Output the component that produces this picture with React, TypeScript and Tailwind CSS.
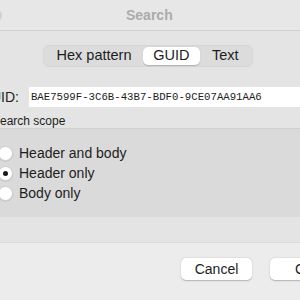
import React from "react";

const segments = ["Hex pattern", "GUID", "Text"];

const scopes = [
  { label: "Header and body", checked: false },
  { label: "Header only", checked: true },
  { label: "Body only", checked: false },
];

function Radio({ checked }: { checked: boolean }) {
  return (
    <span className="flex h-[15px] w-[15px] shrink-0 items-center justify-center rounded-full border border-[#cfcfcf] bg-white shadow-[0_0.5px_1px_rgba(0,0,0,0.15)]">
      {checked && <span className="h-[5px] w-[5px] rounded-full bg-[#1a1a1a]" />}
    </span>
  );
}

export default function App() {
  return (
    <div
      className="flex h-[300px] w-[300px] flex-col overflow-hidden bg-[#ececec] text-[#1d1d1d]"
      style={{ fontFamily: '"Liberation Sans", Arial, sans-serif' }}
    >
      {/* Title bar */}
      <div className="flex h-[31px] shrink-0 items-center border-b border-[#d2d2d2] bg-[#e7e7e7]">
        <span className="ml-[-11px] h-[13px] w-[13px] rounded-full bg-[#cfcfcf]" />
        <span className="ml-[124px] text-[14px] font-bold text-[#ababab]">Search</span>
      </div>

      {/* Content */}
      <div className="flex h-[211px] shrink-0 flex-col bg-[#e4e4e4]">
        <div className="ml-[43px] mt-[14px] flex h-[22px] w-[210px] items-center rounded-[6px] border border-[#d6d6d6] bg-[#dcdcdc] p-px text-[14.5px]">
          {segments.map((s) => (
            <div
              key={s}
              className={
                s === "GUID"
                  ? "flex h-full w-[57px] items-center justify-center rounded-[5px] bg-white shadow-[0_0.5px_1px_rgba(0,0,0,0.2)]"
                  : s === "Text"
                  ? "flex h-full w-[52px] items-center justify-center"
                  : "flex h-full w-[99px] items-center justify-center"
              }
            >
              {s}
            </div>
          ))}
        </div>

        <div className="mt-[20px] flex h-[20px] items-center">
          <span className="ml-[-20px] w-[41px] text-right text-[14px]">GUID:</span>
          <div
            className="ml-[10px] flex h-[20px] w-[300px] shrink-0 items-center bg-white pl-[2px] text-[10.7px]"
            style={{ fontFamily: '"Liberation Mono", "DejaVu Sans Mono", monospace' }}
          >
            BAE7599F-3C6B-43B7-BDF0-9CE07AA91AA6
          </div>
        </div>

        <div className="ml-[-8px] mt-[7px] h-[14px] text-[12px] leading-[14px]">Search scope</div>

        <div className="flex h-[89px] flex-col border-t border-[#d0d0d0] bg-[#dadada] pt-[14px]">
          {scopes.map((r) => (
            <div key={r.label} className="flex h-[20px] items-center gap-[6px] pl-px text-[14px]">
              <span className="ml-[-3px]">
                <Radio checked={r.checked} />
              </span>
              {r.label}
            </div>
          ))}
        </div>
      </div>

      {/* Button bar */}
      <div className="flex flex-1 items-start border-t border-[#dcdcdc] pl-[181px] pt-[15px]">
        <button className="h-[22px] w-[71px] shrink-0 rounded-[5px] bg-white text-[14px] shadow-[0_0.5px_1.5px_rgba(0,0,0,0.25)]">
          Cancel
        </button>
        <button className="ml-[18px] h-[22px] w-[71px] shrink-0 rounded-[5px] bg-white pl-[25px] text-left text-[14px] shadow-[0_0.5px_1.5px_rgba(0,0,0,0.25)]">
          Continue
        </button>
      </div>
    </div>
  );
}
